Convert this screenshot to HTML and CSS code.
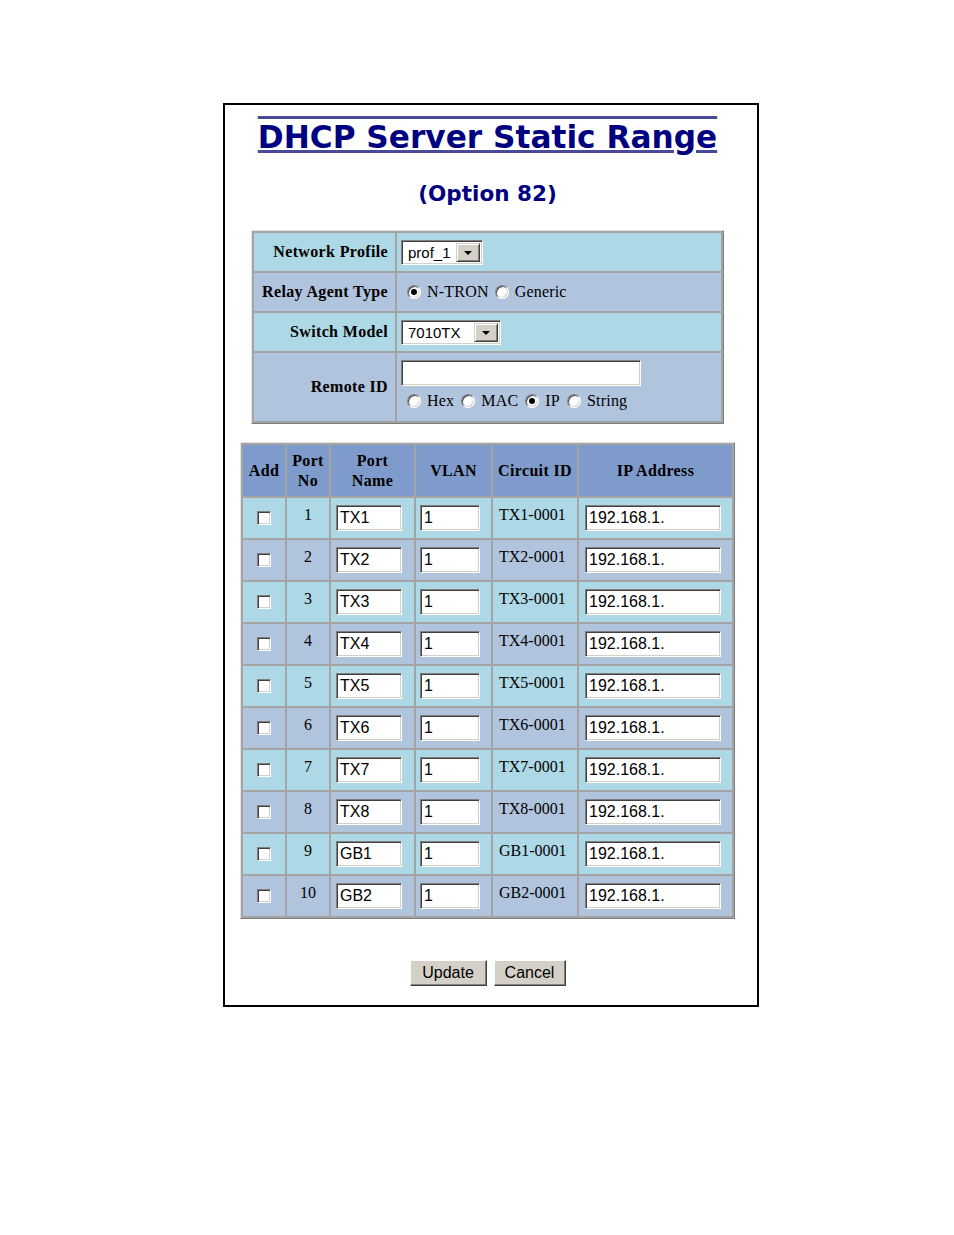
FILE: index.html
```html
<!DOCTYPE html>
<html>
<head>
<meta charset="utf-8">
<title>DHCP Server Static Range</title>
<link rel="stylesheet" href="styles.css">
</head>
<body>
<div class="frame">
  <div class="content">
    <h1 class="title">DHCP Server Static Range</h1>
    <h2 class="subtitle">(Option 82)</h2>

    <table class="cfg">
      <tr class="r-a">
        <td class="lbl">Network Profile</td>
        <td class="val"><span class="sel sel-prof"><span class="sel-txt">prof_1</span><span class="sel-btn"><span class="arrow"></span></span></span></td>
      </tr>
      <tr class="r-b">
        <td class="lbl">Relay Agent Type</td>
        <td class="val val-radio"><span class="radio on"></span><span class="rlbl">N-TRON</span><span class="radio"></span><span class="rlbl">Generic</span></td>
      </tr>
      <tr class="r-a">
        <td class="lbl">Switch Model</td>
        <td class="val"><span class="sel sel-model"><span class="sel-txt">7010TX</span><span class="sel-btn"><span class="arrow"></span></span></span></td>
      </tr>
      <tr class="r-b r-tall">
        <td class="lbl">Remote ID</td>
        <td class="val val-remote">
          <span class="inp inp-remote"></span>
          <div class="radio-row"><span class="radio"></span><span class="rlbl">Hex</span><span class="radio"></span><span class="rlbl">MAC</span><span class="radio on"></span><span class="rlbl">IP</span><span class="radio"></span><span class="rlbl">String</span></div>
        </td>
      </tr>
    </table>

    <table class="ports">
      <tr class="hdr">
        <th class="c-add">Add</th>
        <th class="c-no">Port<br>No</th>
        <th class="c-name">Port<br>Name</th>
        <th class="c-vlan">VLAN</th>
        <th class="c-cid">Circuit ID</th>
        <th class="c-ip">IP Address</th>
      </tr>
      <tr class="r-a"><td class="c-add"><span class="chk"></span></td><td class="c-no">1</td><td class="c-name"><span class="inp inp-name">TX1</span></td><td class="c-vlan"><span class="inp inp-vlan">1</span></td><td class="c-cid">TX1-0001</td><td class="c-ip"><span class="inp inp-ip">192.168.1.</span></td></tr>
      <tr class="r-b"><td class="c-add"><span class="chk"></span></td><td class="c-no">2</td><td class="c-name"><span class="inp inp-name">TX2</span></td><td class="c-vlan"><span class="inp inp-vlan">1</span></td><td class="c-cid">TX2-0001</td><td class="c-ip"><span class="inp inp-ip">192.168.1.</span></td></tr>
      <tr class="r-a"><td class="c-add"><span class="chk"></span></td><td class="c-no">3</td><td class="c-name"><span class="inp inp-name">TX3</span></td><td class="c-vlan"><span class="inp inp-vlan">1</span></td><td class="c-cid">TX3-0001</td><td class="c-ip"><span class="inp inp-ip">192.168.1.</span></td></tr>
      <tr class="r-b"><td class="c-add"><span class="chk"></span></td><td class="c-no">4</td><td class="c-name"><span class="inp inp-name">TX4</span></td><td class="c-vlan"><span class="inp inp-vlan">1</span></td><td class="c-cid">TX4-0001</td><td class="c-ip"><span class="inp inp-ip">192.168.1.</span></td></tr>
      <tr class="r-a"><td class="c-add"><span class="chk"></span></td><td class="c-no">5</td><td class="c-name"><span class="inp inp-name">TX5</span></td><td class="c-vlan"><span class="inp inp-vlan">1</span></td><td class="c-cid">TX5-0001</td><td class="c-ip"><span class="inp inp-ip">192.168.1.</span></td></tr>
      <tr class="r-b"><td class="c-add"><span class="chk"></span></td><td class="c-no">6</td><td class="c-name"><span class="inp inp-name">TX6</span></td><td class="c-vlan"><span class="inp inp-vlan">1</span></td><td class="c-cid">TX6-0001</td><td class="c-ip"><span class="inp inp-ip">192.168.1.</span></td></tr>
      <tr class="r-a"><td class="c-add"><span class="chk"></span></td><td class="c-no">7</td><td class="c-name"><span class="inp inp-name">TX7</span></td><td class="c-vlan"><span class="inp inp-vlan">1</span></td><td class="c-cid">TX7-0001</td><td class="c-ip"><span class="inp inp-ip">192.168.1.</span></td></tr>
      <tr class="r-b"><td class="c-add"><span class="chk"></span></td><td class="c-no">8</td><td class="c-name"><span class="inp inp-name">TX8</span></td><td class="c-vlan"><span class="inp inp-vlan">1</span></td><td class="c-cid">TX8-0001</td><td class="c-ip"><span class="inp inp-ip">192.168.1.</span></td></tr>
      <tr class="r-a"><td class="c-add"><span class="chk"></span></td><td class="c-no">9</td><td class="c-name"><span class="inp inp-name">GB1</span></td><td class="c-vlan"><span class="inp inp-vlan">1</span></td><td class="c-cid">GB1-0001</td><td class="c-ip"><span class="inp inp-ip">192.168.1.</span></td></tr>
      <tr class="r-b"><td class="c-add"><span class="chk"></span></td><td class="c-no">10</td><td class="c-name"><span class="inp inp-name">GB2</span></td><td class="c-vlan"><span class="inp inp-vlan">1</span></td><td class="c-cid">GB2-0001</td><td class="c-ip"><span class="inp inp-ip">192.168.1.</span></td></tr>
    </table>

    <div class="buttons">
      <span class="btn btn-update">Update</span>
      <span class="btn btn-cancel">Cancel</span>
    </div>
  </div>
</div>
</body>
</html>
```
FILE: styles.css
```css
body {
  margin: 8px;
  background: #fff;
  color: #000;
  font-family: "Liberation Serif", "Times New Roman", serif;
  font-size: 16px;
}

.frame {
  margin: 95px 0 0 215px;
  width: 532px;
  height: 900px;
  border: 2px solid #000;
}

.content {
  padding-right: 7px;
  display: flex;
  flex-direction: column;
  align-items: center;
}

.title {
  font-family: "DejaVu Sans", Verdana, sans-serif;
  font-weight: bold;
  font-size: 31.2px;
  line-height: 36px;
  color: #000080;
  text-decoration: underline overline;
  text-decoration-color: #4a4a9a;
  margin: 14px 0 0 0;
  white-space: nowrap;
}

.subtitle {
  font-family: "DejaVu Sans", Verdana, sans-serif;
  font-weight: bold;
  font-size: 21.5px;
  line-height: 26px;
  color: #000080;
  margin: 26px 0 0 0;
}

/* ---------- config table ---------- */
.cfg {
  margin-top: 23px;
  width: 473px;
  border-collapse: separate;
  border-spacing: 2px;
  background: #a4a4a4;
  border: 1px solid;
  border-color: #e4e4e4 #7c7c7c #7c7c7c #e4e4e4;
}

.cfg td {
  padding: 0;
  height: 38px;
}

.r-a td, .r-a th { background: #add8e6; }
.r-b td, .r-b th { background: #b0c4de; }

.cfg .lbl {
  width: 134px;
  padding-right: 7px;
  text-align: right;
  font-weight: bold;
  white-space: nowrap;
  letter-spacing: 0.35px;
}

.cfg .val {
  padding-left: 4px;
  vertical-align: middle;
}

.cfg .r-tall td { height: 61px; }

.val-radio {
  padding-left: 10px !important;
}

.val-remote {
  vertical-align: top !important;
  padding-top: 7px !important;
}

.radio-row {
  margin-top: 6px;
  padding-left: 6px;
  display: flex;
  align-items: center;
}

/* radio buttons */
.radio {
  display: inline-block;
  box-sizing: border-box;
  width: 14px;
  height: 14px;
  border-radius: 50%;
  background: #fff;
  border: 1px solid;
  border-color: #808080 #ffffff #ffffff #808080;
  box-shadow: inset 1px 1px 0 #404040, inset -1px -1px 0 #d4d0c8;
  vertical-align: -2px;
  position: relative;
}

.radio.on::after {
  content: "";
  position: absolute;
  left: 3px;
  top: 3px;
  width: 6px;
  height: 6px;
  border-radius: 50%;
  background: #000;
}

.rlbl {
  margin: 0 7px 0 6px;
  letter-spacing: 0.2px;
}

.val-radio .rlbl { margin-right: 6px; }

/* select boxes */
.sel {
  display: inline-flex;
  align-items: center;
  box-sizing: border-box;
  height: 25px;
  background: #fff;
  border: 1px solid;
  border-color: #808080 #ffffff #ffffff #808080;
  box-shadow: inset 1px 1px 0 #404040, inset -1px -1px 0 #d4d0c8;
  vertical-align: middle;
  padding: 2px;
}

.sel-prof { width: 82px; }
.sel-model { width: 100px; }

.sel-txt {
  flex: 1;
  font-family: "Liberation Sans", Arial, sans-serif;
  font-size: 15px;
  padding-left: 4px;
  line-height: 19px;
}

.sel-btn {
  box-sizing: border-box;
  width: 24px;
  height: 19px;
  background: #d4d0c8;
  border: 1px solid;
  border-color: #d4d0c8 #404040 #404040 #d4d0c8;
  box-shadow: inset 1px 1px 0 #fff, inset -1px -1px 0 #808080;
  display: flex;
  align-items: center;
  justify-content: center;
}

.arrow {
  width: 0;
  height: 0;
  border-left: 4px solid transparent;
  border-right: 4px solid transparent;
  border-top: 4px solid #000;
  margin-top: 1px;
}

/* text inputs */
.inp {
  display: inline-block;
  box-sizing: border-box;
  height: 26px;
  background: #fff;
  border: 1px solid;
  border-color: #808080 #ffffff #ffffff #808080;
  box-shadow: inset 1px 1px 0 #404040, inset -1px -1px 0 #d4d0c8;
  font-family: "Liberation Sans", Arial, sans-serif;
  font-size: 16px;
  line-height: 24px;
  padding: 0 3px;
  vertical-align: middle;
  white-space: nowrap;
  overflow: hidden;
}

.inp-remote { width: 240px; }
.inp-name { width: 66px; }
.inp-vlan { width: 60px; }
.inp-ip { width: 136px; }

/* ---------- ports table ---------- */
.ports {
  margin-top: 18px;
  width: 495px;
  border-collapse: separate;
  border-spacing: 2px;
  background: #a4a4a4;
  border: 1px solid;
  border-color: #e4e4e4 #7c7c7c #7c7c7c #e4e4e4;
}

.ports th {
  background: #7f9bcb;
  font-weight: bold;
  line-height: 20px;
  height: 51px;
  padding: 0;
  text-align: center;
  vertical-align: middle;
  letter-spacing: 0.35px;
}

.ports td {
  height: 40px;
  padding: 0;
}

.ports .c-add { width: 42px; text-align: center; }
.ports .c-no { width: 42px; text-align: center; }
.ports .c-name { width: 83px; }
.ports .c-vlan { width: 75px; }
.ports .c-cid { width: 84px; }

.ports td.c-no, .ports td.c-cid {
  vertical-align: top;
  padding-top: 8px;
  height: 32px;
}

.ports td.c-cid { padding-left: 6px; width: 78px; }
.ports td.c-name { padding-left: 5px; width: 78px; }
.ports td.c-vlan { padding-left: 4px; width: 71px; }
.ports td.c-ip { padding-left: 6px; }

.chk {
  display: block;
  box-sizing: border-box;
  width: 14px;
  height: 14px;
  margin: 0 auto;
  background: #fff;
  border: 1px solid;
  border-color: #808080 #ffffff #ffffff #808080;
  box-shadow: inset 1px 1px 0 #404040, inset -1px -1px 0 #d4d0c8;
}

/* ---------- buttons ---------- */
.buttons {
  margin-top: 41px;
  display: flex;
  gap: 7px;
}

.btn {
  box-sizing: border-box;
  height: 26px;
  padding: 0;
  background: #d4d0c8;
  border: 1px solid;
  border-color: #ffffff #404040 #404040 #ffffff;
  box-shadow: inset -1px -1px 0 #808080;
  font-family: "Liberation Sans", Arial, sans-serif;
  font-size: 16px;
  line-height: 24px;
  color: #000;
  text-align: center;
}

.btn-update { width: 77px; }
.btn-cancel { width: 72px; }
```
